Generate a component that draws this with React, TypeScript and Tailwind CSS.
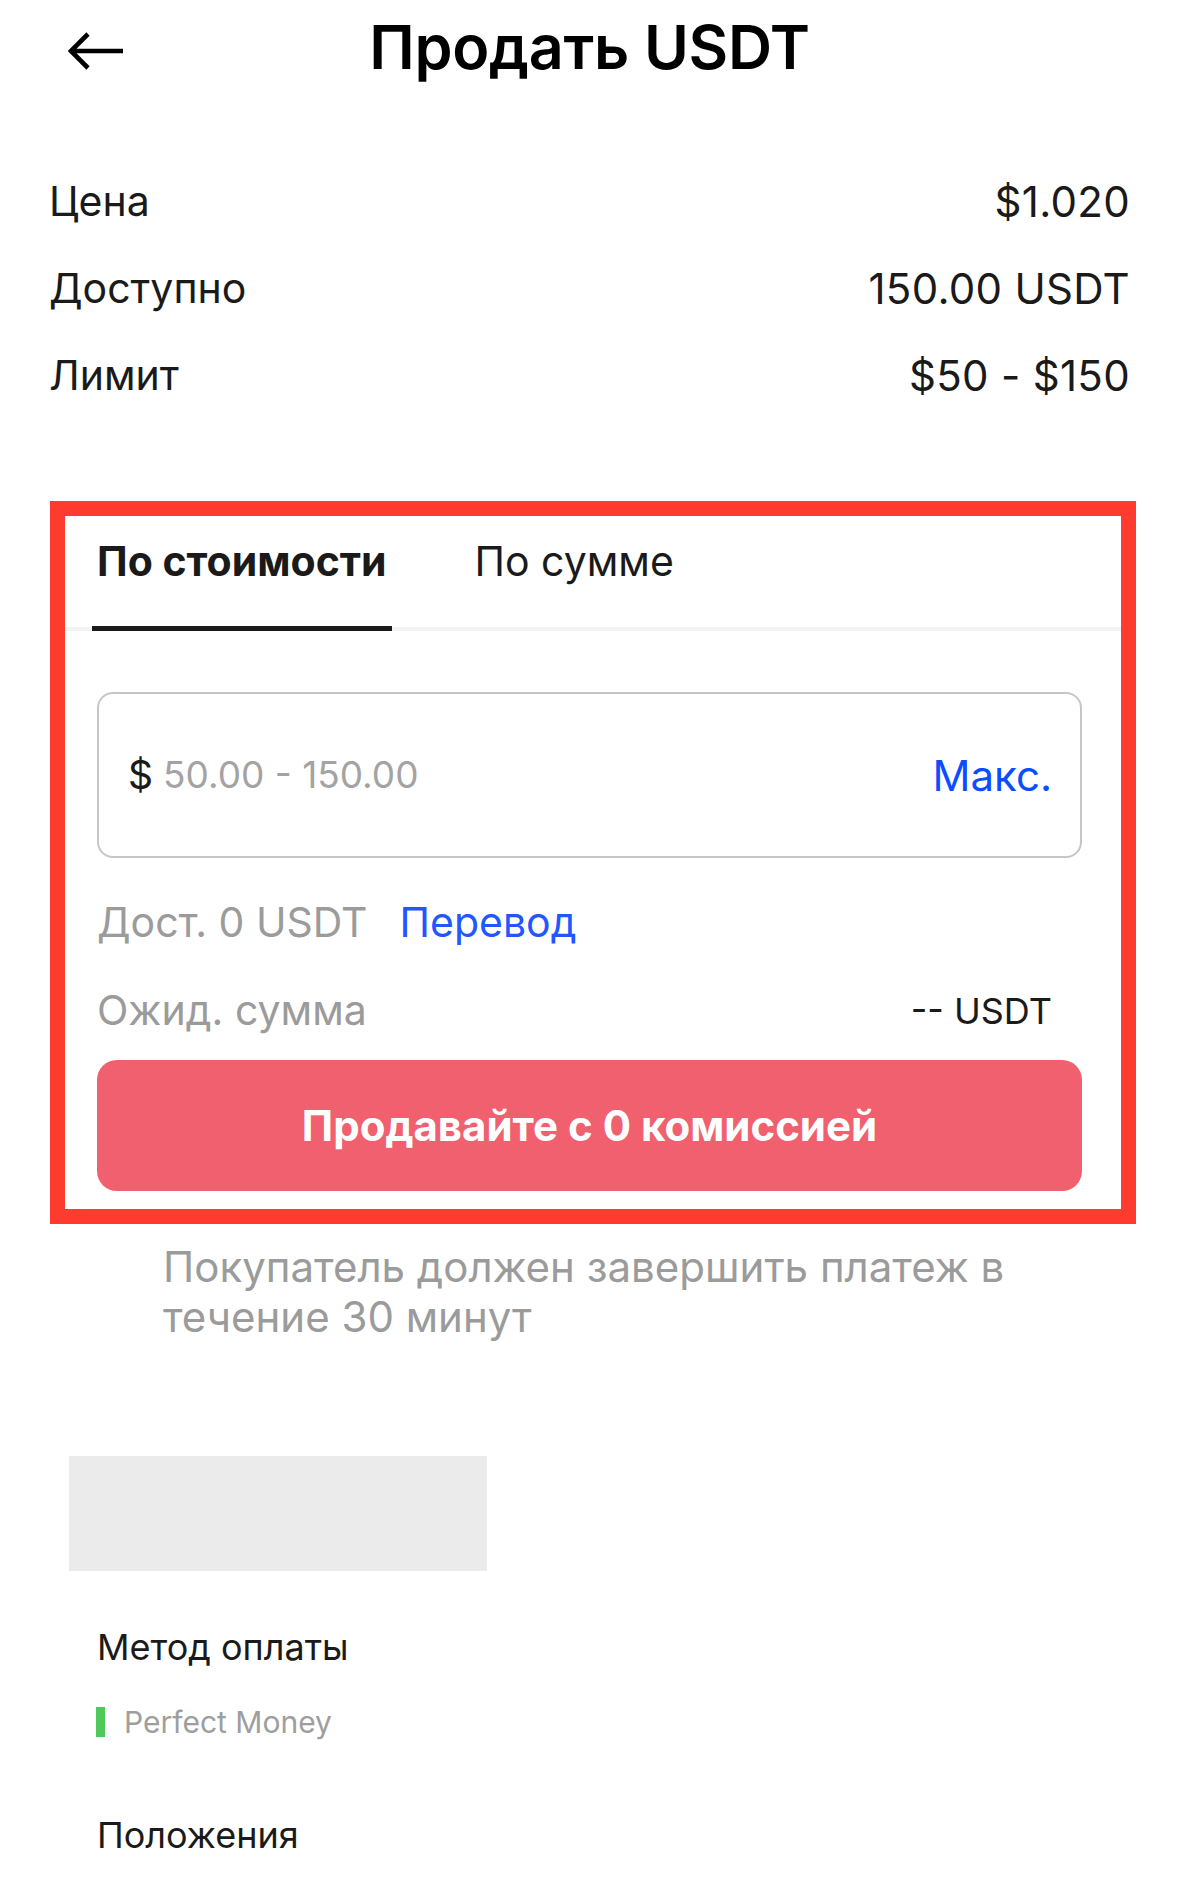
import React from "react";

function BackArrow() {
  return (
    <svg width="56" height="40" viewBox="0 0 56 40" fill="none">
      <path d="M3 20H55" stroke="#000" strokeWidth="4.6" />
      <path d="M20 3L3 20L20 37" stroke="#000" strokeWidth="4.6" strokeLinejoin="miter" />
    </svg>
  );
}

export default function App() {
  return (
    <div
      className="w-[1179px] min-h-[1897px] bg-white text-[#1a1a1a]"
      style={{ fontFamily: "Inter, 'Noto Sans', sans-serif" }}
    >
      {/* Header */}
      <div className="grid h-[100px] grid-cols-[1fr_auto_1fr] items-center">
        <div className="pl-[68px] pt-[2px]">
          <BackArrow />
        </div>
        <div className="-mt-[6px] text-[61px] font-semibold leading-none tracking-[-0.3px] text-black">
          Продать USDT
        </div>
        <div />
      </div>

      {/* Info rows */}
      <div className="mt-[58px] px-[49px]">
        {[
          ["Цена", "$1.020"],
          ["Доступно", "150.00 USDT"],
          ["Лимит", "$50 - $150"],
        ].map(([l, v]) => (
          <div key={l} className="flex h-[87px] items-center justify-between text-[41px]">
            <span>{l}</span>
            <span className="text-[42px] tracking-[0.3px]">{v}</span>
          </div>
        ))}
      </div>

      {/* Highlighted form */}
      <div className="ml-[50px] mt-[82px] w-[1086px] border-[15px] border-[#ff3b30] bg-white">
        {/* Tabs */}
        <div className="flex gap-[78px] border-b-4 border-[#f3f3f3] pl-[27px]">
          <div className="flex flex-col items-stretch">
            <div className="px-[5px] pt-[20px] text-[41px] font-bold leading-[50px]">По стоимости</div>
            <div className="-mb-[4px] mt-[40px] h-[5px] bg-[#1a1a1a]" />
          </div>
          <div className="flex flex-col">
            <div className="px-[5px] pt-[20px] text-[41px] leading-[50px]">По сумме</div>
          </div>
        </div>

        <div className="pb-[18px] pl-[32px] pr-[39px]">
          {/* Input */}
          <div className="mt-[61px] flex h-[166px] items-center justify-between rounded-[16px] border-2 border-[#c6c6c6] pl-[29px] pr-[28px]">
            <div className="flex items-center gap-[10px]">
              <span className="text-[39px] text-[#1a1a1a]">$</span>
              <span className="text-[37px] text-[#a3a3a3]">50.00 - 150.00</span>
            </div>
            <span className="text-[42px] text-[#0a4dff]">Макс.</span>
          </div>

          {/* Available */}
          <div className="mt-[40px] flex h-[50px] items-center gap-[32px] text-[41px]">
            <span className="text-[#9b9b9b]">Дост. 0 USDT</span>
            <span className="text-[#2257ff]">Перевод</span>
          </div>

          {/* Expected */}
          <div className="mt-[38px] flex h-[50px] items-center justify-between pr-[30px]">
            <span className="text-[41px] text-[#9b9b9b]">Ожид. сумма</span>
            <span className="text-[36px] text-[#1a1a1a]">-- USDT</span>
          </div>

          {/* Button */}
          <button className="mt-[24px] flex h-[131px] w-full items-center justify-center rounded-[20px] bg-[#f0606e] text-[42px] font-bold text-white">
            Продавайте с 0 комиссией
          </button>
        </div>
      </div>

      {/* Note */}
      <div className="ml-[163px] mt-[18px] max-w-[900px] text-[42px] leading-[50px] text-[#9b9b9b]">
        Покупатель должен завершить платеж в течение 30 минут
      </div>

      {/* Placeholder image */}
      <div className="ml-[69px] mt-[114px] h-[115px] w-[418px] bg-[#ebebeb]" />

      {/* Payment method */}
      <div className="ml-[97px] mt-[53px] text-[36px] leading-[46px]">Метод оплаты</div>
      <div className="ml-[96px] mt-[32px] flex h-[40px] items-center gap-[19px]">
        <div className="h-[30px] w-[9px] bg-[#4fc95a]" />
        <span className="text-[30px] text-[#9e9e9e]">Perfect Money</span>
      </div>

      <div className="ml-[97px] mt-[70px] text-[36px] leading-[46px]">Положения</div>
    </div>
  );
}
